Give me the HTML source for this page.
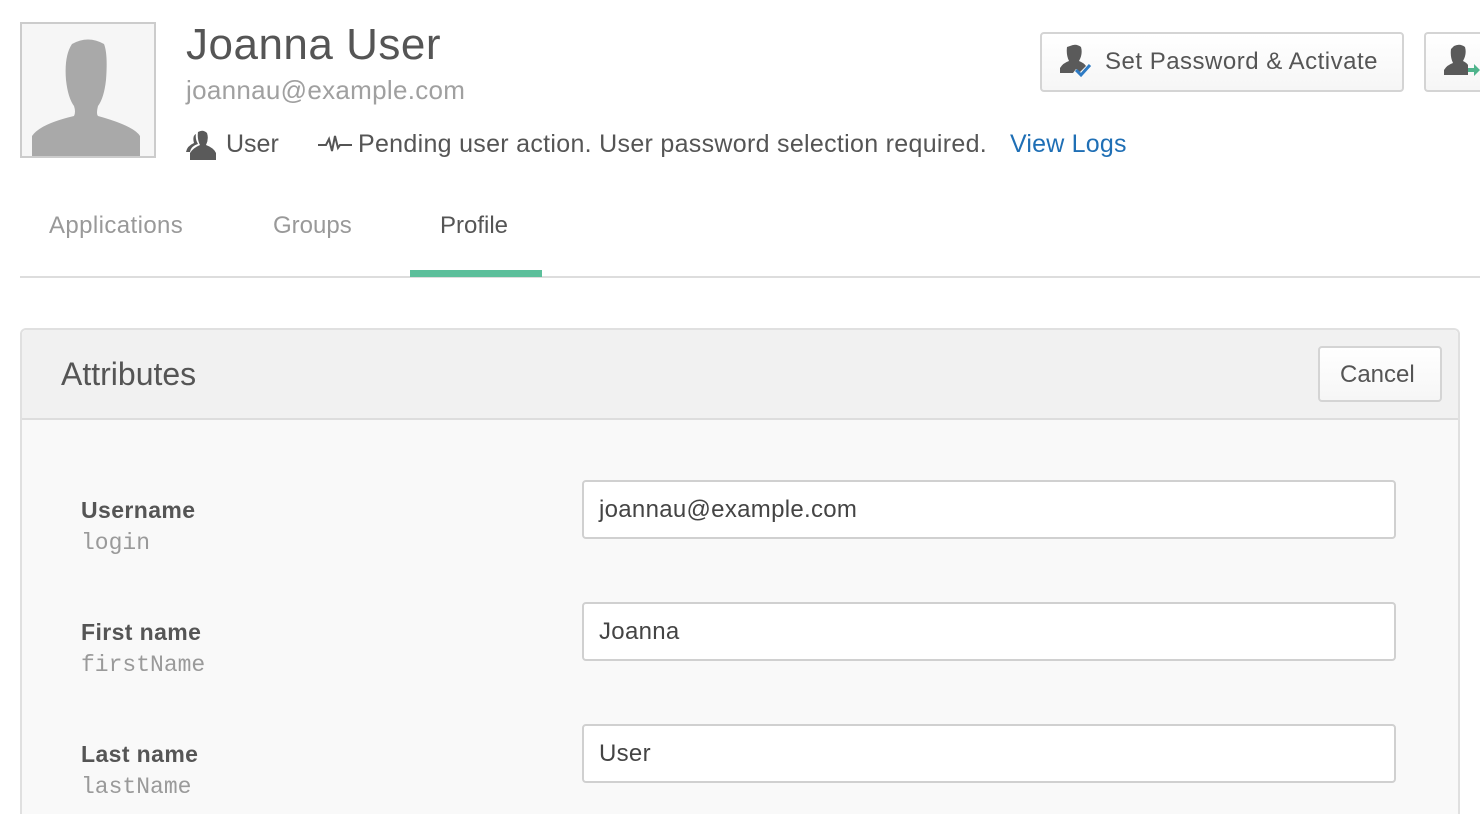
<!DOCTYPE html>
<html style="height:814px;overflow:hidden"><head><style>
body{margin:0;width:1480px;height:814px;overflow:hidden;background:#fff;font-family:"Liberation Sans",sans-serif;color:#5e5e5e;position:relative}
.a{position:absolute}
.btn{position:absolute;border:2px solid #d4d4d4;border-radius:4px;background:linear-gradient(#fff,#f6f6f6);box-sizing:border-box;font-size:24px;color:#555}
.inp{position:absolute;left:582px;width:814px;height:59px;border:2px solid #d0d0d0;border-radius:4px;background:#fff;box-sizing:border-box;font-size:24px;color:#444;padding:12px 15px;line-height:31px;letter-spacing:0.3px}
.lbl{position:absolute;left:81px;font-size:23px;font-weight:bold;color:#555;letter-spacing:0.4px}
.key{position:absolute;left:81px;font-family:"Liberation Mono",monospace;font-size:23px;color:#9a9a9a}
</style></head><body>
<div class="a" style="left:20px;top:22px;width:136px;height:136px;border:2px solid #ccc;box-sizing:border-box;background:#f6f6f6;overflow:hidden">
<svg width="132" height="132" viewBox="0 0 132 132"><path fill="#a9a9a9" d="M50 20q16-9 32 0q4 10 2 36q-2 18-8 26q-2 8 0 10q36 10 42 20l0 20H10v-20q8-12 42-20q2-4 0-10q-6-8-8-26q-2-24 6-36z"/></svg></div>
<div class="a" style="left:186px;top:20px;font-size:44px;color:#555;letter-spacing:0.5px">Joanna User</div>
<div class="a" style="left:186px;top:75px;font-size:26px;color:#a0a0a0;letter-spacing:0.3px">joannau@example.com</div>
<svg class="a" style="left:186px;top:130px" width="34" height="30" viewBox="0 0 34 30"><path fill="#5a5a5a" d="M12 2q5-3 9 1q2 6-1 12q8 3 10 8v7H4v-7q3-5 10-8q-3-6-2-13zM10 4q-4 2-2 9q-7 3-8 9h4q1-6 8-8q-3-5-2-10z"/></svg>
<div class="a" style="left:226px;top:130px;font-size:25px;color:#555">User</div>
<svg class="a" style="left:318px;top:134px" width="34" height="20" viewBox="0 0 34 20"><path fill="none" stroke="#555" stroke-width="2" d="M0 11h8l3-6 3 12 3-15 3 12 2-3h12"/></svg>
<div class="a" style="left:358px;top:130px;font-size:25px;color:#555;letter-spacing:0.3px">Pending user action. User password selection required.</div>
<div class="a" style="left:1010px;top:130px;font-size:25px;color:#1f6fb5;letter-spacing:0.2px">View Logs</div>
<div class="btn" style="left:1040px;top:32px;width:364px;height:60px">
<svg class="a" style="left:18px;top:10px" width="36" height="36" viewBox="0 0 36 36"><path fill="#5a5a5a" d="M10 2q6-3 11 1q2 7-2 14q5 2 7 5l-6 6-4-3-3 4H0v-5q3-5 9-7q-3-6-2-14z"/><path fill="none" stroke="#2e7bc4" stroke-width="3" d="M16 26l5 5 9-10"/></svg>
<div class="a" style="left:63px;top:14px;letter-spacing:0.5px">Set Password &amp; Activate</div></div>
<div class="btn" style="left:1424px;top:32px;width:56px;height:60px;border-right:none;border-radius:4px 0 0 4px">
<svg class="a" style="left:18px;top:10px" width="36" height="36" viewBox="0 0 36 36"><path fill="#5a5a5a" d="M10 2q6-3 11 1q2 7-2 14q4 2 5 4v10H0v-5q3-5 9-7q-3-6-2-14z"/><path fill="#4fb48c" d="M24 24h6v-4l6 6-6 6v-4h-6z"/></svg></div>
<div class="a" style="left:49px;top:212px;font-size:24px;color:#999;letter-spacing:0.4px">Applications</div>
<div class="a" style="left:273px;top:212px;font-size:24px;color:#999">Groups</div>
<div class="a" style="left:440px;top:212px;font-size:24px;color:#555">Profile</div>
<div class="a" style="left:20px;top:276px;width:1460px;height:2px;background:#ddd"></div>
<div class="a" style="left:410px;top:270px;width:132px;height:7px;background:#5cbf9b"></div>
<div class="a" style="left:20px;top:328px;width:1440px;height:486px;border:2px solid #e0e0e0;border-bottom:none;border-radius:6px 6px 0 0;background:#f9f9f9;box-sizing:border-box"></div>
<div class="a" style="left:22px;top:330px;width:1436px;height:88px;background:#f1f1f1;border-bottom:2px solid #ddd;border-radius:5px 5px 0 0"></div>
<div class="a" style="left:61px;top:356px;font-size:32px;color:#555">Attributes</div>
<div class="btn" style="left:1318px;top:346px;width:124px;height:56px"><div class="a" style="left:20px;top:13px">Cancel</div></div>
<div class="lbl" style="top:497px">Username</div><div class="key" style="top:530px">login</div>
<div class="inp" style="top:480px">joannau@example.com</div>
<div class="lbl" style="top:619px">First name</div><div class="key" style="top:652px">firstName</div>
<div class="inp" style="top:602px">Joanna</div>
<div class="lbl" style="top:741px">Last name</div><div class="key" style="top:774px">lastName</div>
<div class="inp" style="top:724px">User</div>
</body></html>
